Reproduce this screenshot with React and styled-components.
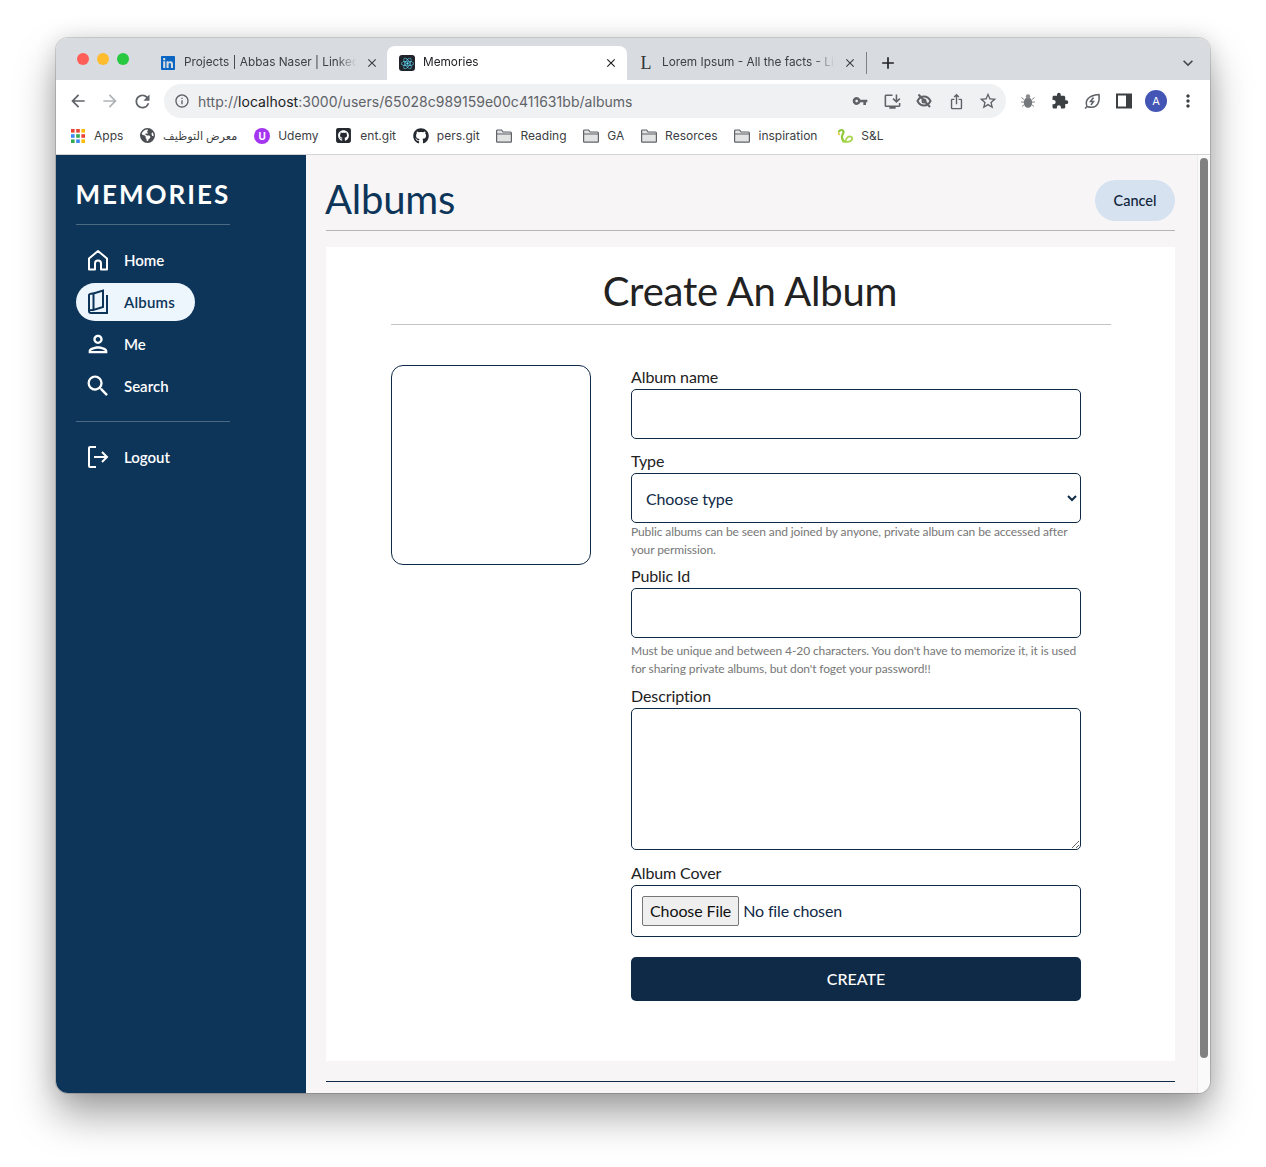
import styled, { createGlobalStyle } from 'styled-components';
import { FaGithub, FaEarthAmericas, FaLinkedin, FaReact, FaSquareGithub } from 'react-icons/fa6';
import { MdExtension, MdVpnKey, MdOutlineStarBorder, MdInstallDesktop, MdIosShare, MdClose, MdAdd, MdKeyboardArrowDown, MdMoreVert, MdArrowBack, MdArrowForward, MdRefresh, MdInfoOutline, MdSearch, MdOutlinePerson } from 'react-icons/md';

const GlobalStyle = createGlobalStyle`
  * { box-sizing: border-box; }
  html, body { margin: 0; background: #fff; }
  body { padding: 38px 56px 74px; font-family: Lato, sans-serif; }
`

const Win = styled.div`
  width: 1154px;
  height: 1055px;
  display: flex;
  flex-direction: column;
  border-radius: 12px;
  overflow: hidden;
  box-shadow: 0 0 0 1px rgba(0,0,0,.14), 0 22px 40px rgba(0,0,0,.36), 0 0 22px rgba(0,0,0,.12);
`

/* browser chrome */
const TabStrip = styled.div`
  flex: 0 0 42px;
  display: flex;
  align-items: flex-end;
  background: #d8dbe0;
  font-family: Inter, sans-serif;
  font-size: 11.8px;
  color: #3c4043;
`
const Lights = styled.div`
  width: 91px;
  align-self: flex-start;
  padding: 15px 0 0 21px;
  display: flex;
  gap: 8px;
`
const Light = styled.span`
  width: 12px;
  height: 12px;
  border-radius: 50%;
  background: ${(p) => p.$color};
`
const Tab = styled.div`
  width: ${(p) => (p.$active ? 240 : 239)}px;
  height: 34px;
  margin: ${(p) => (p.$active ? '0 -2px 0 1px' : 0)};
  padding: ${(p) => (p.$active ? '0 9px 0 12px' : '0 7px 0 13px')};
  display: flex;
  align-items: center;
  gap: 8px;
  border-radius: 8px 8px 0 0;
  background: ${(p) => (p.$active ? '#fff' : 'transparent')};
  color: ${(p) => (p.$active ? '#202124' : '#3c4043')};
`
const TabIcon = styled.span`
  width: 16px;
  height: 16px;
  flex: none;
  display: flex;
  align-items: center;
  justify-content: center;
`
const ReactIcon = styled(TabIcon)`
  background: #20232a;
  border-radius: 3px;
  color: #61dafb;
`
const SerifL = styled(TabIcon)`
  font-family: "Liberation Serif", serif;
  font-size: 18px;
  color: #333;
`
const TabTitle = styled.span`
  flex: 1;
  padding-bottom: 2px;
  white-space: nowrap;
  overflow: hidden;
  -webkit-mask-image: linear-gradient(to right, #000 88%, transparent 100%);
  mask-image: linear-gradient(to right, #000 88%, transparent 100%);
`
const TabDivider = styled.span`
  width: 1px;
  height: 22px;
  margin: 0 0 6px 2px;
  background: #7d8185;
`
const NewTab = styled.span`
  margin: 0 0 7px 11px;
  display: flex;
  color: #202124;
`
const StripEnd = styled.span`
  margin: 0 0 7px auto;
  padding-right: 12px;
  display: flex;
  color: #45484c;
`
const Toolbar = styled.div`
  flex: 0 0 42px;
  display: flex;
  align-items: center;
  background: #fff;
  padding-left: 6px;
`
const ToolBtn = styled.span`
  width: 32px;
  height: 32px;
  flex: none;
  display: flex;
  align-items: center;
  justify-content: center;
  color: ${(p) => p.$color || '#5f6368'};
`
const Omnibox = styled.div`
  width: 842px;
  height: 34px;
  margin: 0 6px;
  padding: 0 2px;
  display: flex;
  align-items: center;
  background: #f0f1f3;
  border-radius: 17px;
`
const Url = styled.div`
  flex: 1;
  font-family: Inter, sans-serif;
  font-size: 14px;
  letter-spacing: .035px;
  color: #5f6368;
  b { font-weight: 400; color: #202124; }
`
const Avatar = styled.span`
  width: 22px;
  height: 22px;
  border-radius: 50%;
  background: #4355b5;
  color: #fff;
  font-family: Inter, sans-serif;
  font-size: 11px;
  display: flex;
  align-items: center;
  justify-content: center;
`
const Bookmarks = styled.div`
  flex: 0 0 33px;
  padding: 0 0 5px 15px;
  display: flex;
  align-items: center;
  gap: 16.8px;
  background: #fff;
  border-bottom: 1px solid #d2d3d6;
  font-family: Inter, sans-serif;
  font-size: 12px;
  color: #3c4043;
`
const Mark = styled.span`
  display: flex;
  align-items: center;
  gap: ${(p) => p.$gap || 8}px;
  margin-left: ${(p) => p.$offset || 0}px;
  white-space: nowrap;
  svg { flex: none; }
`
const Udemy = styled.span`
  width: 16px;
  height: 16px;
  border-radius: 50%;
  background: #a435f0;
  color: #fff;
  font-size: 10px;
  font-weight: 700;
  line-height: 16px;
  text-align: center;
`
const ArabicText = styled.span`
  font-family: "Noto Sans", "DejaVu Sans", sans-serif;
  font-size: 11.3px;
`

/* page */
const Body = styled.div`
  flex: 1;
  min-height: 0;
  display: flex;
`
const Sidebar = styled.aside`
  width: 250px;
  flex: none;
  padding: 20px;
  background: #0d3559;
  color: #fff;
`
const Logo = styled.div`
  font-size: 26px;
  font-weight: 700;
  line-height: 38px;
  letter-spacing: 2px;
  text-indent: -.5px;
  padding-bottom: 11px;
  width: 154px;
  border-bottom: 1px solid #4d6a85;
  white-space: nowrap;
`
const Nav = styled.nav`
  padding: 16px 0;
  width: 154px;
  display: flex;
  flex-direction: column;
  align-items: flex-start;
  gap: 4px;
`
const Divider = styled.div`
  width: 154px;
  height: 1px;
  background: #4d6a85;
`
const NavItem = styled.a`
  height: 38px;
  padding: 0 20px 0 10px;
  display: flex;
  align-items: center;
  gap: 14px;
  border-radius: 19px;
  font-size: 15px;
  letter-spacing: ${(p) => (p.$active ? '.2px' : 0)};
  font-weight: 600;
  background: ${(p) => (p.$active ? '#eef6fd' : 'transparent')};
  color: ${(p) => (p.$active ? '#0d3559' : '#fff')};
`
const Main = styled.main`
  flex: 1;
  min-width: 0;
  padding: 25px 22px 0 20px;
  background: #f7f5f6;
  overflow: hidden;
`
const Header = styled.header`
  display: flex;
  align-items: flex-start;
  justify-content: space-between;
  height: 51px;
  border-bottom: 1px solid #b5b5b7;
  margin-bottom: 16px;
`
const PageTitle = styled.h1`
  margin: -4px 0 0 -1px;
  font-size: 40px;
  font-weight: 400;
  line-height: 46px;
  letter-spacing: -.2px;
  color: #0d3559;
`
const CancelBtn = styled.button`
  width: 80px;
  height: 41px;
  padding: 0 0 1px;
  border: 0;
  border-radius: 21px;
  background: #d6e2f0;
  color: #10243a;
  font-family: Lato, sans-serif;
  font-size: 14.5px;
  font-weight: 500;
`
const Card = styled.section`
  height: 814px;
  padding: 0 64px 0 65px;
  background: #fff;
`
const CardTitle = styled.h2`
  margin: 0;
  height: 78px;
  padding-right: 2px;
  font-size: 40px;
  font-weight: 400;
  line-height: 88px;
  letter-spacing: -.2px;
  text-align: center;
  color: #222;
  border-bottom: 1px solid #c4c4c6;
`
const FormRow = styled.div`
  display: flex;
  gap: 40px;
  margin-top: 40px;
`
const Cover = styled.div`
  width: 200px;
  height: 200px;
  flex: none;
  border: 1px solid #0f2a46;
  border-radius: 12px;
`
const Form = styled.form`
  width: 450px;
  display: flex;
  flex-direction: column;
`
const Field = styled.div`
  margin-bottom: ${(p) => p.$gap}px;
`
const Label = styled.label`
  display: block;
  font-size: 16px;
  line-height: 24px;
  letter-spacing: -.1px;
  color: #222;
`
const controlBase = `
  display: block;
  width: 100%;
  border: 1px solid #0f2a46;
  border-radius: 5px;
  background: #fff;
  color: #0f2a46;
  font-family: Lato, sans-serif;
  font-size: 16px;
  letter-spacing: -.15px;
  outline: none;
`
const Input = styled.input`
  ${controlBase}
  height: 50px;
  padding: 0 14px;
`
const Select = styled.select`
  ${controlBase}
  height: 50px;
  padding: 0 10px;
`
const TextArea = styled.textarea`
  ${controlBase}
  height: 142px;
  padding: 10px 14px;
`
const FileInput = styled.input`
  ${controlBase}
  height: 52px;
  padding: 10px;
  &::file-selector-button {
    height: 30px;
    margin-right: 4px;
    padding: 0 7px 2px;
    font-family: Lato, sans-serif;
    font-size: 16px;
    letter-spacing: -.1px;
    color: #111;
    background: #efefef;
    border: 1px solid #767676;
    border-radius: 2px;
  }
`
const Help = styled.p`
  margin: ${(p) => p.$top || 0}px 0 0;
  font-size: 12px;
  line-height: 18px;
  letter-spacing: -.11px;
  color: #777;
`
const CreateBtn = styled.button`
  width: 100%;
  height: 44px;
  padding: 0 0 2px;
  border: 0;
  border-radius: 5px;
  background: #0f2a46;
  color: #fff;
  font-family: Lato, sans-serif;
  font-size: 16px;
  font-weight: 500;
`
const Footer = styled.div`
  margin-top: 20px;
  border-top: 1px solid #0f2a46;
`
const ScrollTrack = styled.div`
  width: 13px;
  flex: none;
  padding: 3px 2px 0;
  background: #fafafa;
  border-left: 1px solid #ececec;
`
const ScrollThumb = styled.div`
  height: 900px;
  border-radius: 5px;
  background: #808080;
`

/* hand drawn icons */
const HomeIcon = () => (
  <svg width="24" height="24" viewBox="0 0 24 24" fill="none" stroke="currentColor" strokeWidth="2">
    <path d="M3 21.5V10.5L12 3l9 7.5v11h-6v-6a3 3 0 0 0-6 0v6z" strokeLinejoin="round" />
  </svg>
)
const BookIcon = () => (
  <svg width="24" height="26" viewBox="0 0 24 26" fill="none" stroke="currentColor" strokeWidth="2">
    <path d="M3 6v16c0 1.400 1 2 2 2h16V6" />
    <path d="M7.500 4.500 17 1.500V18L7.500 21z" />
    <path d="M3 6c0-1 1-1.500 4.500-1.500M3 22c0-1 1-1 4.500-1" />
  </svg>
)
const LogoutIcon = () => (
  <svg width="24" height="24" viewBox="0 0 24 24" fill="none" stroke="currentColor" strokeWidth="2">
    <path d="M10 2H4a1 1 0 0 0-1 1v18a1 1 0 0 0 1 1h6" />
    <path d="M8 12h13M16 7l5 5-5 5" />
  </svg>
)
const FolderIcon = () => (
  <svg width="16" height="14" viewBox="0 0 16 14" fill="#e3e3e3" stroke="#5f6368" strokeWidth="1.2">
    <path d="M.6 12.500V2a1 1 0 0 1 1-1h4l1.500 2h7.300a1 1 0 0 1 1 1v8.500a.6.6 0 0 1-.6.6H1.200a.6.6 0 0 1-.6-.6z" />
    <path d="M.6 5h14.800" fill="none" />
  </svg>
)
const AppsIcon = () => (
  <svg width="14" height="14" viewBox="0 0 14 14">
    {['#ea4335', '#ea4335', '#fbbc04', '#4285f4', '#34a853', '#ea4335', '#34a853', '#4285f4', '#fbbc04'].map((c, i) => (
      <rect key={i} x={(i % 3) * 5.2} y={Math.floor(i / 3) * 5.2} width="3.600" height="3.600" fill={c} />
    ))}
  </svg>
)
const SnakeIcon = () => (
  <svg width="16" height="16" viewBox="0 0 16 16" fill="none" strokeLinecap="round">
    <path d="M2 3.500c1-2 4-2 4.500 0s-2 3-1.500 6 2 4 3 4" stroke="#8fc93a" strokeWidth="2.200" />
    <path d="M6 13.500c3 .5 8 .5 9-2s-2-4-4-2.500-2 3-3 4.500" stroke="#a5d64c" strokeWidth="1.800" />
    <path d="M1.500 5c0 1 .5 1.500 1 1.500" stroke="#e6c33d" strokeWidth="1.500" />
  </svg>
)
const LeafIcon = () => (
  <svg width="18" height="18" viewBox="0 0 18 18" fill="none" stroke="#5f6368" strokeWidth="1.500">
    <path d="M2 16.500l2-2c-2-5 0-11 12-12 1 8-2 12.500-7 12.800-2 .1-3.500-.3-5-.8z" />
    <path d="M10.500 5.500 7.500 9.500h3L8 13" />
  </svg>
)
const BugIcon = () => (
  <svg width="16" height="16" viewBox="0 0 16 16" stroke="#8a8d90" strokeWidth="1" fill="none">
    <path d="M1.500 4.500 4 6.500M14.500 4.500 12 6.500M1 9h3M15 9h-3M2 13.500 4.500 11.500M14 13.500 11.500 11.500" />
    <ellipse cx="8" cy="9.500" rx="4.200" ry="5.300" fill="#75787c" stroke="none" />
    <circle cx="8" cy="3.500" r="2.200" fill="#8a8d90" stroke="none" />
  </svg>
)
const SidePanelIcon = () => (
  <svg width="16" height="16" viewBox="0 0 16 16">
    <rect x="1" y="1.500" width="14" height="13" fill="none" stroke="#3c4043" strokeWidth="2" />
    <rect x="10" y="1.500" width="5" height="13" fill="#3c4043" />
  </svg>
)
const EyeOffIcon = () => (
  <svg width="16" height="16" viewBox="0 0 16 16" fill="none" stroke="#5f6368" strokeWidth="2">
    <path d="M1.500 8C3 5 5.500 3.500 8 3.500S13 5 14.500 8C13 11 10.500 12.500 8 12.500S3 11 1.500 8z" />
    <circle cx="8" cy="8" r="1.500" />
    <path d="M2.500 1.500 14 14" />
  </svg>
)

const navItems = [
  { label: 'Home', icon: <HomeIcon /> },
  { label: 'Albums', icon: <BookIcon />, active: true },
  { label: 'Me', icon: <MdOutlinePerson size={28} style={{ margin: '0 -2px' }} /> },
  { label: 'Search', icon: <MdSearch size={28} style={{ margin: '0 -2px' }} /> },
];

const folders = ['Reading', 'GA', 'Resorces', 'inspiration'];

export default function App() {
  return (
    <>
      <GlobalStyle />
      <Win>
        <TabStrip>
          <Lights>
            <Light $color="#ff5f57" />
            <Light $color="#febc2e" />
            <Light $color="#28c840" />
          </Lights>
          <Tab>
            <TabIcon><FaLinkedin size={16} color="#0a66c2" /></TabIcon>
            <TabTitle>Projects | Abbas Naser | LinkedIn</TabTitle>
            <MdClose size={14} />
          </Tab>
          <Tab $active>
            <ReactIcon><FaReact size={13} /></ReactIcon>
            <TabTitle>Memories</TabTitle>
            <MdClose size={14} />
          </Tab>
          <Tab>
            <SerifL>L</SerifL>
            <TabTitle>Lorem Ipsum - All the facts - Lipsum</TabTitle>
            <MdClose size={14} />
          </Tab>
          <TabDivider />
          <NewTab><MdAdd size={20} /></NewTab>
          <StripEnd><MdKeyboardArrowDown size={20} /></StripEnd>
        </TabStrip>

        <Toolbar>
          <ToolBtn><MdArrowBack size={20} /></ToolBtn>
          <ToolBtn $color="#b0b3b8"><MdArrowForward size={20} /></ToolBtn>
          <ToolBtn><MdRefresh size={21} /></ToolBtn>
          <Omnibox>
            <ToolBtn><MdInfoOutline size={16} /></ToolBtn>
            <Url>http://<b>localhost</b>:3000/users/65028c989159e00c411631bb/albums</Url>
            <ToolBtn><MdVpnKey size={16} /></ToolBtn>
            <ToolBtn><MdInstallDesktop size={19} /></ToolBtn>
            <ToolBtn><EyeOffIcon /></ToolBtn>
            <ToolBtn><MdIosShare size={17} /></ToolBtn>
            <ToolBtn><MdOutlineStarBorder size={20} /></ToolBtn>
          </Omnibox>
          <ToolBtn><BugIcon /></ToolBtn>
          <ToolBtn $color="#3c4043"><MdExtension size={18} /></ToolBtn>
          <ToolBtn><LeafIcon /></ToolBtn>
          <ToolBtn><SidePanelIcon /></ToolBtn>
          <ToolBtn><Avatar>A</Avatar></ToolBtn>
          <ToolBtn $color="#3c4043"><MdMoreVert size={20} /></ToolBtn>
        </Toolbar>

        <Bookmarks>
          <Mark $gap={9}><AppsIcon />Apps</Mark>
          <Mark><FaEarthAmericas size={15} color="#4a4d51" /><ArabicText>معرض التوظيف</ArabicText></Mark>
          <Mark><Udemy>U</Udemy>Udemy</Mark>
          <Mark><FaSquareGithub size={17} color="#24292f" />ent.git</Mark>
          <Mark><FaGithub size={16} color="#24292f" />pers.git</Mark>
          {folders.map((name) => (
            <Mark key={name}><FolderIcon />{name}</Mark>
          ))}
          <Mark $offset={3}><SnakeIcon />S&amp;L</Mark>
        </Bookmarks>

        <Body>
          <Sidebar>
            <Logo>MEMORIES</Logo>
            <Nav>
              {navItems.map((item) => (
                <NavItem key={item.label} $active={item.active}>
                  {item.icon}
                  {item.label}
                </NavItem>
              ))}
            </Nav>
            <Divider />
            <Nav>
              <NavItem><LogoutIcon />Logout</NavItem>
            </Nav>
          </Sidebar>

          <Main>
            <Header>
              <PageTitle>Albums</PageTitle>
              <CancelBtn>Cancel</CancelBtn>
            </Header>
            <Card>
              <CardTitle>Create An Album</CardTitle>
              <FormRow>
                <Cover />
                <Form>
                  <Field $gap={10}>
                    <Label>Album name</Label>
                    <Input type="text" />
                  </Field>
                  <Field $gap={5}>
                    <Label>Type</Label>
                    <Select defaultValue="">
                      <option value="">Choose type</option>
                      <option value="public">Public</option>
                      <option value="private">Private</option>
                    </Select>
                    <Help>Public albums can be seen and joined by anyone, private album can be accessed after your permission.</Help>
                  </Field>
                  <Field $gap={6}>
                    <Label>Public Id</Label>
                    <Input type="text" />
                    <Help $top={4}>Must be unique and between 4-20 characters. You don't have to memorize it, it is used for sharing private albums, but don't foget your password!!</Help>
                  </Field>
                  <Field $gap={11}>
                    <Label>Description</Label>
                    <TextArea />
                  </Field>
                  <Field $gap={20}>
                    <Label>Album Cover</Label>
                    <FileInput type="file" />
                  </Field>
                  <CreateBtn type="button">CREATE</CreateBtn>
                </Form>
              </FormRow>
            </Card>
            <Footer />
          </Main>
          <ScrollTrack><ScrollThumb /></ScrollTrack>
        </Body>
      </Win>
    </>
  )
}
